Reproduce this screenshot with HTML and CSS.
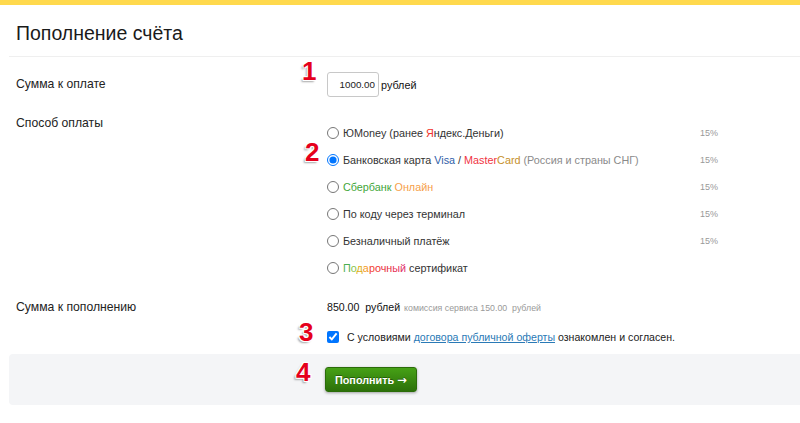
FILE: index.html
```html
<!DOCTYPE html>
<html lang="ru">
<head>
<meta charset="utf-8">
<title>Пополнение счёта</title>
<link rel="stylesheet" href="styles.css">
</head>
<body>
<div class="topbar"></div>
<div class="page">
  <div class="head"><h1 class="title">Пополнение счёта</h1></div>

  <div class="row row-sum">
    <div class="label label-tall">Сумма к оплате</div>
    <div class="content">
      <input class="amount" type="text" value="1000.00">
      <span class="cur">рублей</span>
      <span class="badge badge-1">1</span>
    </div>
  </div>

  <div class="row row-method">
    <div class="label">Способ оплаты</div>
    <div class="content">
      <span class="badge badge-2">2</span>
      <ul class="methods">
        <li class="method"><label class="opt"><input type="radio" name="m"><span>ЮMoney (ранее <span class="c-red">Я</span>ндекс.Деньги)</span></label><span class="pct">15%</span></li>
        <li class="method"><label class="opt"><input type="radio" name="m" checked><span>Банковская карта <span class="c-visa">Visa</span> / <span class="c-mc">Master</span><span class="c-card">Card</span> <span class="c-gray">(Россия и страны СНГ)</span></span></label><span class="pct">15%</span></li>
        <li class="method"><label class="opt"><input type="radio" name="m"><span><span class="c-green">Сбербанк</span> <span class="c-orange">Онлайн</span></span></label><span class="pct">15%</span></li>
        <li class="method"><label class="opt"><input type="radio" name="m"><span>По коду через терминал</span></label><span class="pct">15%</span></li>
        <li class="method"><label class="opt"><input type="radio" name="m"><span>Безналичный платёж</span></label><span class="pct">15%</span></li>
        <li class="method"><label class="opt"><input type="radio" name="m"><span><span class="g1">П</span><span class="g2">о</span><span class="g3">д</span><span class="g4">а</span><span class="g5">р</span><span class="g6">о</span><span class="g7">ч</span><span class="g8">н</span><span class="g9">ы</span><span class="g10">й</span> сертификат</span></label><span class="pct"></span></li>
      </ul>
    </div>
  </div>

  <div class="row row-total">
    <div class="label">Сумма к пополнению</div>
    <div class="content total">
      <span class="total-sum">850.00&nbsp; рублей</span>
      <span class="fee">комиссия сервиса 150.00&nbsp; рублей</span>
    </div>
  </div>

  <div class="row row-agree">
    <div class="label"></div>
    <div class="content">
      <span class="badge badge-3">3</span>
      <label class="agree"><input type="checkbox" checked><span>С условиями <a class="link" href="#">договора публичной оферты</a> ознакомлен и согласен.</span></label>
    </div>
  </div>

  <div class="panel">
    <span class="badge badge-4">4</span>
    <button class="btn" type="button">Пополнить <span class="arrow">→</span></button>
  </div>
</div>
</body>
</html>
```
FILE: styles.css
```css
* { box-sizing: border-box; }
html, body { margin: 0; padding: 0; background: #fff; }
body {
  font-family: "Liberation Sans", Arial, sans-serif;
  color: #222;
  width: 800px;
  height: 423px;
  overflow: hidden;
}
.topbar { height: 5px; background: #ffd94d; }
.page { padding-left: 9px; }
.head {
  padding: 16px 7px 11px;
  border-bottom: 1px solid #efefef;
}
.title {
  margin: 0;
  font-size: 19.5px;
  line-height: 24px;
  font-weight: normal;
  color: #1a1a1a;
}
.row {
  display: grid;
  grid-template-columns: 311px 1fr;
  padding-left: 7px;
}
.label { font-size: 12.2px; line-height: 16px; color: #222; }
.label-tall { line-height: 24px; }
.content { position: relative; font-size: 10.6px; line-height: 16px; }
.row-sum { padding-top: 15px; }
.row-sum .content { display: flex; align-items: center; gap: 2px; }
.amount {
  width: 52px;
  height: 25px;
  margin: 0;
  border: 1px solid #c8c8c8;
  border-radius: 3px;
  padding: 0 3px 0 2px;
  text-align: right;
  font: 9.8px "Liberation Sans", Arial, sans-serif;
  color: #222;
}
.cur { color: #111; font-size: 10.8px; }
.row-method { margin-top: 18px; }
.methods { list-style: none; margin: 0; padding: 4px 0 0; }
.method {
  display: grid;
  grid-template-columns: 373px auto;
  align-items: center;
  height: 27px;
}
.opt { display: flex; align-items: center; gap: 4px; color: #333; font-size: 10.8px; }
.opt input { margin: 0; width: 12px; height: 12px; }
.pct { font-size: 9px; color: #999; }
.c-red { color: #f0332b; }
.c-visa { color: #2f5ea8; }
.c-mc { color: #f0333f; }
.c-card { color: #c68f2a; }
.c-gray { color: #8a8a8a; }
.c-green { color: #42a63a; }
.c-orange { color: #f6a04a; }
.g1 { color: #4caf50; }
.g2 { color: #8bc34a; }
.g3 { color: #e0b020; }
.g4 { color: #f59a23; }
.g5 { color: #f3452e; }
.g6 { color: #ee3333; }
.g7 { color: #e8303a; }
.g8 { color: #e83040; }
.g9 { color: #e8345a; }
.g10 { color: #e0306a; }
.row-total { margin-top: 18px; }
.total { display: flex; align-items: baseline; gap: 4px; }
.total-sum { color: #111; }
.fee { font-size: 8.8px; color: #9a9a9a; }
.row-agree { margin-top: 13px; }
.agree { display: flex; align-items: center; gap: 8px; color: #222; }
.agree input { margin: 0; width: 12px; height: 12px; }
.link { color: #2a7ab6; text-decoration: underline; }
.panel {
  position: relative;
  margin-top: 9px;
  background: #f4f5f7;
  border-radius: 4px 0 0 4px;
  padding: 13px 0 13px 316px;
}
.btn {
  display: block;
  height: 25px;
  padding: 0 9px;
  border: 1px solid #2b6c09;
  border-radius: 3px;
  background: linear-gradient(#46a116, #2c7009);
  box-shadow: 0 1px 3px rgba(0,0,0,0.35);
  color: #fff;
  font: bold 10.8px "Liberation Sans", Arial, sans-serif;
  text-shadow: 0 -1px 0 rgba(0,0,0,0.35);
}
.arrow { font-family: "DejaVu Sans", sans-serif; font-size: 11.5px; }
.badge {
  position: absolute;
  font: bold 26px/1 "Liberation Sans", Arial, sans-serif;
  color: #e5001c;
  text-shadow:
    -1px -1px 0 #fff, 1px -1px 0 #fff, -1px 1px 0 #fff, 1px 1px 0 #fff,
    -2px 2px 2px rgba(0,0,0,0.35);
}
.badge-1 { left: -25px; top: -14px; }
.badge-2 { left: -22px; top: 24px; }
.badge-3 { left: -28px; top: -10px; }
.badge-4 { left: 287px; top: 5px; }
```
